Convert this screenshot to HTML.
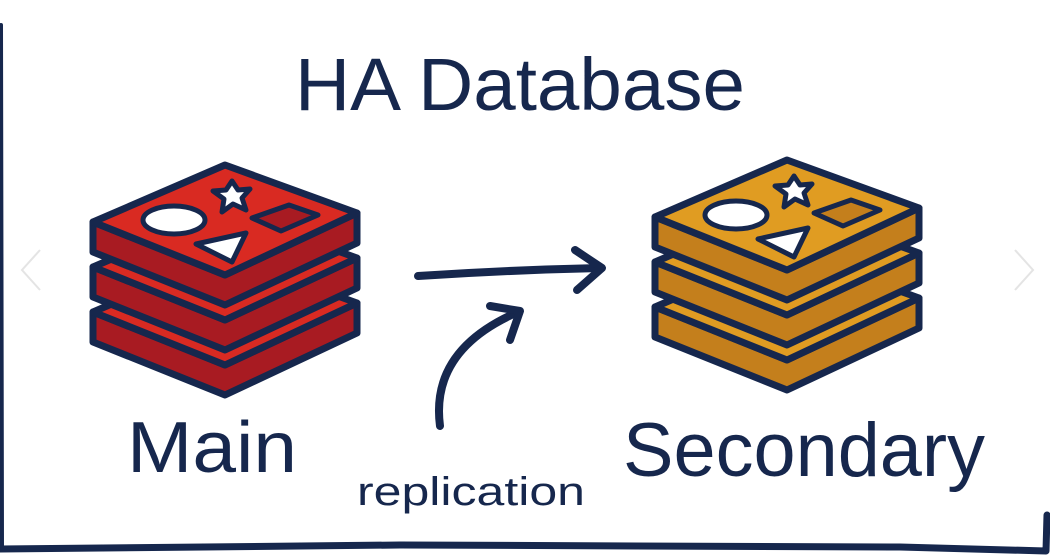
<!DOCTYPE html>
<html><head><style>
html,body{margin:0;padding:0;background:#fff;width:1050px;height:557px;overflow:hidden}
text{font-family:"Liberation Sans",sans-serif;fill:#16274d}
</style></head><body>
<svg width="1050" height="557" viewBox="0 0 1050 557" xmlns="http://www.w3.org/2000/svg">
<g fill="none" stroke="#16274d" stroke-linecap="round" stroke-linejoin="round">
<path d="M1 25 L2 548" stroke-width="4"/>
<path d="M0 549 L400 545 L900 547 L1046 551 L1047 515" stroke-width="7"/>
</g>
<text x="295" y="110" font-size="74" textLength="450" lengthAdjust="spacingAndGlyphs">HA Database</text>
<text x="127" y="472" font-size="72" textLength="170" lengthAdjust="spacingAndGlyphs">Main</text>
<text x="623" y="476" font-size="76" textLength="362" lengthAdjust="spacingAndGlyphs">Secondary</text>
<text x="357" y="505" font-size="40" textLength="228" lengthAdjust="spacingAndGlyphs">replication</text>
<g fill="none" stroke="#16274d" stroke-width="8" stroke-linecap="round" stroke-linejoin="round">
<path d="M418 276 Q510 270 600 268"/>
<path d="M575 250 L602 268 L577 290"/>
<path d="M440 426 Q430 350 518 312"/>
<path d="M490 306 L520 311 L510 340"/>
</g>
<defs>
<g id="layer">
<path d="M-132 57 L0 110 L132 48 L132 78 L0 140 L-132 87 Z"/>
<path d="M0 0 L-132 57 L0 110 L132 48 Z"/>
</g>
</defs>
<!-- red stack -->
<g stroke="#16274d" stroke-width="7" stroke-linejoin="round">
<g transform="translate(225,255)"><path d="M-132 57 L0 110 L132 48 L132 78 L0 140 L-132 87 Z" fill="#a81b22"/><path d="M0 0 L-132 57 L0 110 L132 48 Z" fill="#d92a22"/></g>
<g transform="translate(225,210)"><path d="M-132 57 L0 110 L132 48 L132 78 L0 140 L-132 87 Z" fill="#a81b22"/><path d="M0 0 L-132 57 L0 110 L132 48 Z" fill="#d92a22"/></g>
<g transform="translate(225,165)"><path d="M-132 57 L0 110 L132 48 L132 78 L0 140 L-132 87 Z" fill="#a81b22"/><path d="M0 0 L-132 57 L0 110 L132 48 Z" fill="#d92a22"/></g>
<ellipse cx="174" cy="220" rx="31" ry="14" fill="#fff" stroke-width="5"/>
<path d="M232 181 L238 190 L250 189 L242 198 L246 210 L233 204 L222 212 L224 199 L213 191 L226 190 Z" fill="#fff" stroke-width="5"/>
<path d="M252 218 L289 205 L318 215 L281 231 Z" fill="#a81b22" stroke-width="5"/>
<path d="M196 244 L246 233 L232 262 Z" fill="#fff" stroke-width="5"/>
</g>
<!-- orange stack -->
<g stroke="#16274d" stroke-width="7" stroke-linejoin="round">
<g transform="translate(787,250)"><path d="M-132 57 L0 110 L132 48 L132 78 L0 140 L-132 87 Z" fill="#c47f1c"/><path d="M0 0 L-132 57 L0 110 L132 48 Z" fill="#e09c22"/></g>
<g transform="translate(787,205)"><path d="M-132 57 L0 110 L132 48 L132 78 L0 140 L-132 87 Z" fill="#c47f1c"/><path d="M0 0 L-132 57 L0 110 L132 48 Z" fill="#e09c22"/></g>
<g transform="translate(787,160)"><path d="M-132 57 L0 110 L132 48 L132 78 L0 140 L-132 87 Z" fill="#c47f1c"/><path d="M0 0 L-132 57 L0 110 L132 48 Z" fill="#e09c22"/></g>
<ellipse cx="736" cy="215" rx="31" ry="14" fill="#fff" stroke-width="5"/>
<path d="M794 176 L800 185 L812 184 L804 193 L808 205 L795 199 L784 207 L786 194 L775 186 L788 185 Z" fill="#fff" stroke-width="5"/>
<path d="M814 213 L851 200 L880 210 L843 226 Z" fill="#c47f1c" stroke-width="5"/>
<path d="M758 239 L808 228 L794 257 Z" fill="#fff" stroke-width="5"/>
</g>
<g fill="none" stroke="#e4e4e4" stroke-width="2">
<path d="M40 250 L22 270 L40 290"/>
<path d="M1015 250 L1033 270 L1015 290"/>
</g>
</svg>
</body></html>
